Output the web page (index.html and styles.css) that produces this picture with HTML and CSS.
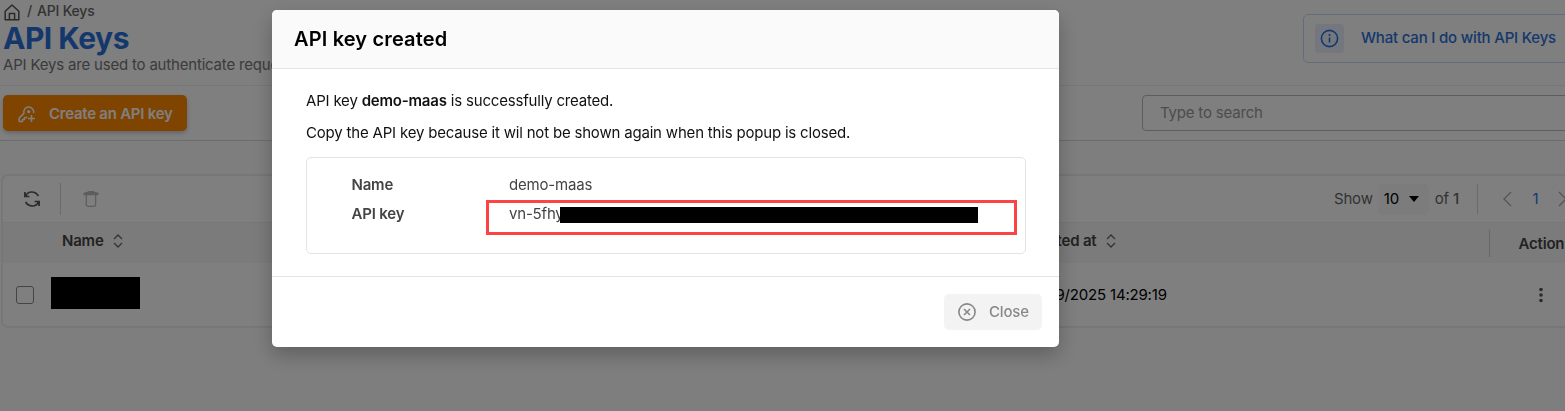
FILE: index.html
```html
<!DOCTYPE html>
<html lang="en">
<head>
<meta charset="utf-8">
<title>API Keys</title>
<link rel="stylesheet" href="styles.css">
</head>
<body>
<main class="page">
  <header class="page-header">
    <div class="heading">
      <nav class="breadcrumb">
        <svg class="home" width="16" height="17" viewBox="0 0 16 17" fill="none" stroke="currentColor" stroke-width="1.5" stroke-linejoin="round"><path d="M1.2 7.2 8 1l6.8 6.2v8.6H1.2zM5.4 15.8V9.6h5.2v6.2"/></svg>
        <span class="slash">/</span>
        <span class="crumb">API Keys</span>
      </nav>
      <h1 class="title">API Keys</h1>
      <p class="subtitle">API Keys are used to authenticate requests</p>
    </div>
    <a class="help">
      <span class="help-icon">
        <svg width="19" height="19" viewBox="0 0 19 19" fill="none" stroke="currentColor" stroke-width="1.6"><circle cx="9.5" cy="9.5" r="8.1"/><path d="M9.5 8.5v5M9.5 5v2"/></svg>
      </span>
      <span class="help-text">What can I do with API Keys</span>
    </a>
  </header>
  <section class="actions">
    <button class="create">
      <svg width="18" height="18" viewBox="0 0 18 18" fill="none" stroke="currentColor" stroke-width="1.5" stroke-linejoin="round"><path d="M15.6 8.2A5 5 0 1 0 5.900 8.400L1.200 13v3.600h3.300v-2h1.900v-1.900h1.700l.9-1"/><circle cx="10.7" cy="6.600" r=".9" fill="currentColor"/><path d="M13.5 10v7M10 13.500h7"/></svg>
      <span class="create-text">Create an API key</span>
    </button>
    <div class="search"><span class="search-text">Type to search</span></div>
  </section>
  <section class="card">
    <div class="card-tools">
      <svg class="refresh" width="16" height="16" viewBox="0 0 16 16" fill="none" stroke="currentColor" stroke-width="1.7"><path d="M.9 1v4.5h4.5M1.3 5.2C4-.2 11-.5 14.4 5M15.1 15v-4.500h-4.500M14.700 10.800C12 16.200 5 16.500 1.600 11"/></svg>
      <span class="divider"></span>
      <svg class="trash" width="16" height="16" viewBox="0 0 16 16" fill="none" stroke="currentColor" stroke-width="1.3" stroke-linejoin="round"><path d="M3.300 4v9.500q0 1.800 1.800 1.800h5.800q1.800 0 1.800-1.800V4"/><path d="M1 2.300 4.500 1.500 5.500.7h5l1 .8 3.500.8v1.200H1z" fill="currentColor"/></svg>
      <div class="pager">
        <span class="show">Show</span>
        <span class="select"><span class="ten">10</span><i class="caret"></i></span>
        <span class="of">of <b class="total">1</b></span>
        <span class="divider pager-divider"></span>
        <svg class="prev" width="9" height="16" viewBox="0 0 9 16" fill="none" stroke="currentColor" stroke-width="1.300"><path d="M8 1 1 8l7 7"/></svg>
        <span class="current">1</span>
        <svg class="next" width="9" height="16" viewBox="0 0 9 16" fill="none" stroke="currentColor" stroke-width="1.300"><path d="m1 1 7 7-7 7"/></svg>
      </div>
    </div>
    <div class="row head">
      <div class="cell-name">Name <svg class="sort" width="10" height="14" viewBox="0 0 10 14" fill="none" stroke="currentColor" stroke-width="1.300"><path d="m1 5 4-4 4 4M1 9l4 4 4-4"/></svg></div>
      <div class="cell-date">Created at <svg class="sort" width="10" height="14" viewBox="0 0 10 14" fill="none" stroke="currentColor" stroke-width="1.300"><path d="m1 5 4-4 4 4M1 9l4 4 4-4"/></svg></div>
      <div class="cell-action">Action</div>
    </div>
    <div class="row item">
      <span class="check"></span>
      <span class="mask"></span>
      <span class="date">19/09/2025 14:29:19</span>
      <svg class="more" width="4" height="16" viewBox="0 0 4 16" fill="currentColor"><circle cx="2" cy="2.500" r="1.800"/><circle cx="2" cy="8" r="1.800"/><circle cx="2" cy="13.500" r="1.800"/></svg>
    </div>
  </section>
</main>
<div class="backdrop">
  <section class="dialog">
    <header class="dialog-head"><h2 class="dialog-title">API key created</h2></header>
    <div class="dialog-body">
      <p class="line"><span class="line-a">API key <b>demo-maas</b> is successfully created.</span></p>
      <p class="line"><span class="line-b">Copy the API key because it wil not be shown again when this popup is closed.</span></p>
      <div class="details">
        <span class="label"><span>Name</span></span><span class="value">demo-maas</span>
        <span class="label"><span>API key</span></span><span class="value key">vn-5fhy<i class="key-mask"></i><i class="highlight"></i></span>
      </div>
    </div>
    <footer class="dialog-foot">
      <button class="close">
        <svg width="18" height="18" viewBox="0 0 18 18" fill="none" stroke="currentColor" stroke-width="1.600"><circle cx="9" cy="9" r="8.100"/><path d="m6 6 6 6m0-6-6 6"/></svg>
        <span>Close</span>
      </button>
    </footer>
  </section>
</div>
</body>
</html>
```
FILE: styles.css
```css
* { box-sizing: border-box; }
body {
  margin: 0;
  height: 411px;
  overflow: hidden;
  background: #fdfdfd;
  font: 15px/20px Inter, sans-serif;
  letter-spacing: -.19px;
  color: #444;
}
h1, h2, p { margin: 0; }
button { border: 0; font: inherit; letter-spacing: inherit; }
svg, i { flex: none; display: block; }
.page { width: 1620px; height: 411px; }
.page-header {
  height: 86px;
  display: flex;
  padding: 0 0 0 3px;
  border-bottom: 1px solid #eee;
  background: #fefefe;
}
.heading { width: 1300px; }
.breadcrumb {
  height: 22px;
  display: flex;
  align-items: center;
  padding: 0 0 0 1px;
  font-size: 14px;
  font-weight: 500;
  color: #666;
}
.home { margin-top: 2px; width: 16px; color: #555; }
.slash { margin: 0 5px 0 7px; }
.title { font-size: 30px; line-height: 32px; font-weight: 700; letter-spacing: -.5px; color: #2b70d9; }
.subtitle { padding-top: 1px; line-height: 20px; color: #777; }
.help {
  width: 300px;
  height: 49px;
  margin-top: 14px;
  display: flex;
  align-items: center;
  gap: 17px;
  padding-left: 11px;
  border: 1px solid #c5d9f5;
  border-radius: 5px;
  color: #2b70d9;
  font-weight: 500;
}
.help-text { padding-bottom: 1px; }
.help-icon {
  width: 29px;
  height: 29px;
  display: flex;
  align-items: center;
  justify-content: center;
  border-radius: 3px;
  background: #e8f1fd;
}
.actions {
  height: 55px;
  display: flex;
  align-items: flex-start;
  justify-content: space-between;
  padding: 9px 3px 0;
  border-bottom: 1px solid #d8d8d8;
  background: #fff;
}
.create {
  width: 184px;
  height: 36px;
  display: flex;
  align-items: center;
  gap: 13px;
  padding: 1px 0 0 15px;
  border-radius: 5px;
  background: #ff8800;
  color: #fff;
  font-weight: 600;
  letter-spacing: -.25px;
  box-shadow: 0 2px 4px rgba(0, 0, 0, .22);
  white-space: nowrap;
}
.search {
  width: 475px;
  height: 36px;
  display: flex;
  align-items: center;
  padding: 0 0 0 17px;
  border: 1px solid #bbb;
  border-radius: 4px;
  color: #999;
}
.card {
  width: 1590px;
  height: 154px;
  margin: 33px 0 0 1px;
  border: 2px solid #eee;
  border-radius: 7px;
  background: #fff;
  overflow: hidden;
}
.card-tools {
  height: 47px;
  display: flex;
  align-items: center;
  padding-left: 21px;
  border-bottom: 1px solid #eee;
}
.divider { width: 1px; height: 32px; background: #d5d5d5; }
.refresh { margin-right: 20px; color: #555; }
.trash { margin-left: 22px; color: #bbb; }
.pager { display: flex; align-items: center; margin-left: 1235px; color: #666; }
.select {
  width: 51px;
  height: 31px;
  display: flex;
  align-items: center;
  justify-content: space-between;
  margin: 0 6px 0 5px;
  padding: 0 10px 0 6px;
  border-radius: 5px;
  background: #f8f8f8;
  color: #000;
}
.caret { border: 5.500px solid transparent; border-top: 6px solid #000; border-bottom: 0; }
.total { font-weight: 500; }
.pager-divider { height: 30px; margin: 0 25px 0 18px; }
.prev, .next { color: #aaa; }
.current { width: 9px; margin: 0 18px 0 19px; color: #2b70d9; text-align: center; }
.row { display: flex; align-items: center; }
.head { height: 40px; background: #f7f7f7; font-weight: 600; color: #444; }
.cell-name { display: flex; align-items: center; gap: 9px; width: 969px; padding: 0 0 4px 59px; }
.cell-date { display: flex; align-items: center; gap: 10px; width: 517px; padding: 0 0 4px 51px; }
.cell-action { height: 27px; padding: 4px 0 0 28.500px; border-left: 1px solid #ccc; }
.sort { color: #666; }
.item { height: 63px; padding-left: 13px; color: #000; }
.check { width: 18px; height: 18px; border: 1px solid #888; border-radius: 3px; }
.mask { width: 89px; height: 32px; margin: -4px 0 0 17px; background: #000; }
.date { width: 150px; margin-left: 886px; white-space: nowrap; }
.more { margin-left: 363px; color: #555; }
.backdrop {
  position: fixed;
  inset: 0;
  display: flex;
  align-items: flex-start;
  padding: 10px 0 0 272px;
  background: rgba(0, 0, 0, .5);
}
.dialog {
  width: 787px;
  height: 337px;
  border-radius: 5px;
  background: #fff;
  overflow: hidden;
  box-shadow: 0 8px 20px rgba(0, 0, 0, .25);
}
.dialog-head { height: 59px; padding: 17px 22px; border-bottom: 1px solid #e4e4e4; background: #fafafa; }
.dialog-title { font-size: 20px; line-height: 24px; font-weight: 600; letter-spacing: .15px; color: #000; }
.dialog-body { height: 207px; padding: 22px 33px 0 34px; color: #111; }
.line { height: 20px; margin-bottom: 12px; white-space: nowrap; }
.line b { font-weight: 600; }
.details {
  width: 720px;
  height: 97px;
  display: grid;
  grid-template-columns: 157.500px 1fr;
  grid-template-rows: 20px 20px;
  row-gap: 9px;
  margin-top: 14px;
  padding: 17px 44.500px;
  border: 1px solid #e3e3e3;
  border-radius: 5px;
  color: #444;
}
.label { font-weight: 600; }
.key { position: relative; }
.key-mask { position: absolute; left: 51px; top: 3px; width: 418px; height: 16px; background: #000; }
.highlight { position: absolute; left: -23px; top: -4px; width: 531px; height: 35px; border: 3px solid #fc4444; }
.dialog-foot {
  height: 71px;
  display: flex;
  justify-content: flex-end;
  padding: 17px 17px 0 0;
  border-top: 1px solid #e3e3e3;
}
.close {
  width: 98px;
  height: 36px;
  display: flex;
  align-items: center;
  gap: 13px;
  padding: 0 0 0 14px;
  border-radius: 5px;
  background: #f3f3f3;
  color: #888;
  font-weight: 500;
}
```
